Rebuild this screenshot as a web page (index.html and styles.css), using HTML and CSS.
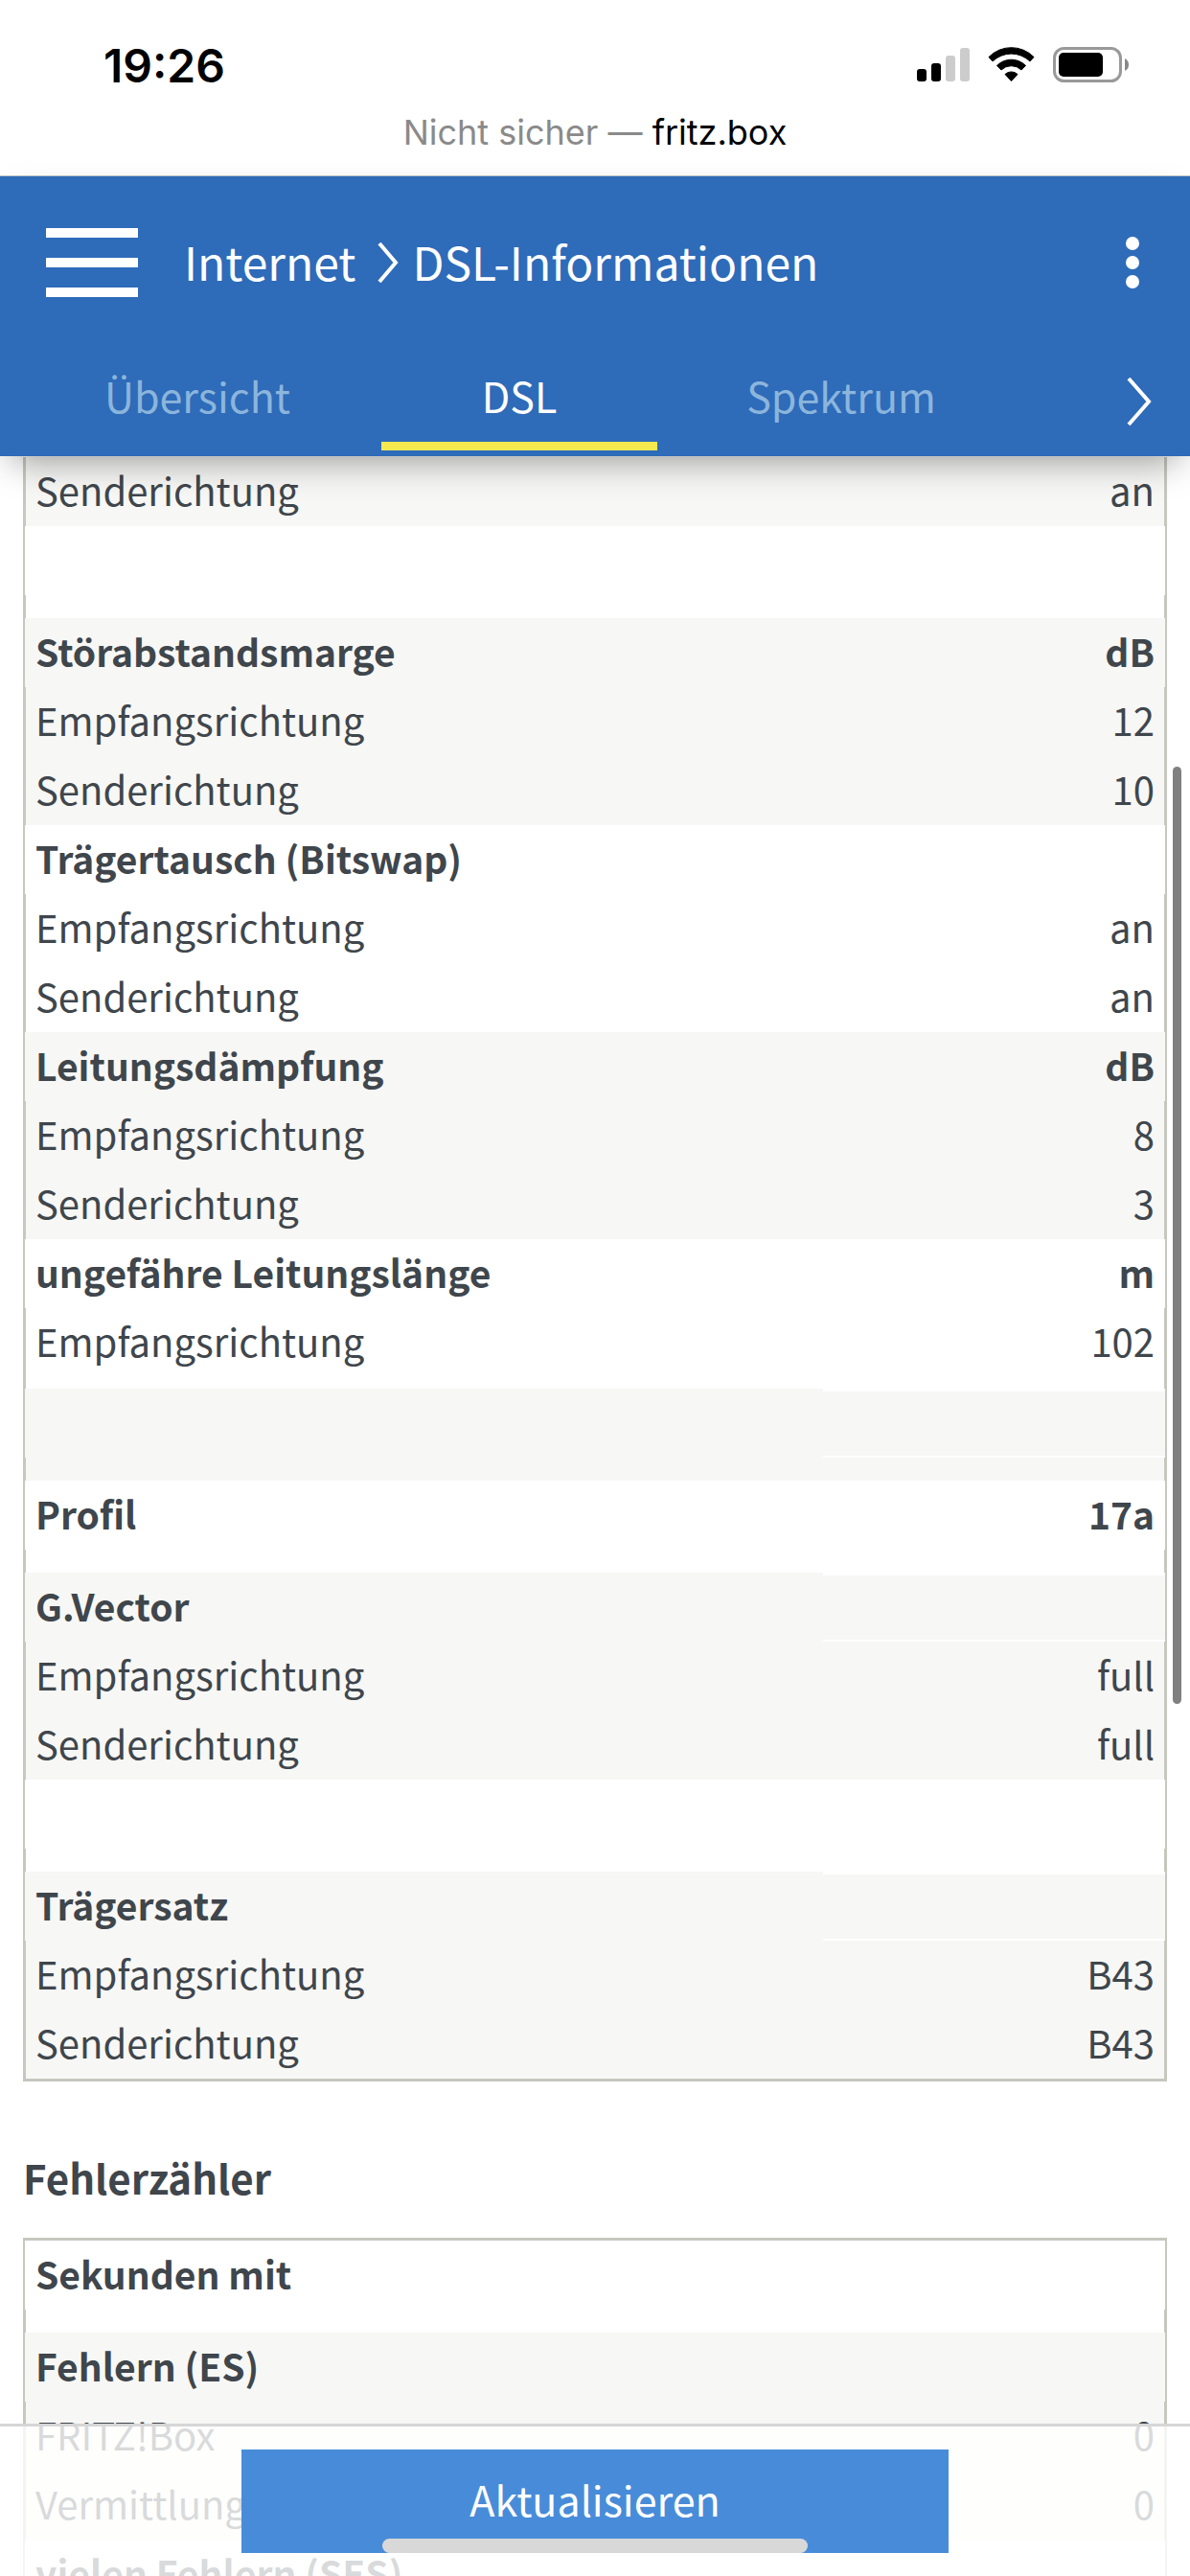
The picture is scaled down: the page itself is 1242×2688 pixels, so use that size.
FILE: index.html
```html
<!DOCTYPE html>
<html lang="de">
<head>
    <meta charset="UTF-8">
    <meta name="viewport" content="width=device-width, initial-scale=1.0">
    <title>FRITZ!Box - DSL-Informationen</title>
    <link rel="stylesheet" href="styles.css">
</head>
<body>

    <div class="status-bar">
        <div class="status-row">
            <span class="clock">19:26</span>
            <svg class="status-icons" width="222" height="38" viewBox="0 0 222 38" aria-hidden="true">
                <rect x="0" y="23" width="10" height="13" rx="3"/>
                <rect x="15" y="17" width="10" height="19" rx="3"/>
                <rect x="30" y="9" width="10" height="27" rx="3" fill="#ccc"/>
                <rect x="45" y="1" width="10" height="35" rx="3" fill="#ccc"/>
                <path d="M75 10.500A33 33 0 0 1 122 10.500L118 15A28 28 0 0 0 79 15Z" stroke="#000" stroke-linejoin="round"/>
                <path d="M83.500 19.500A21 21 0 0 1 113.500 19.500L109 24A15 15 0 0 0 88 24Z" stroke="#000" stroke-linejoin="round"/>
                <path d="M92 28.500A9.500 9.500 0 0 1 105 28.500L98.500 35.500Z" stroke="#000" stroke-linejoin="round"/>
                <rect x="143.500" y="1.500" width="69" height="34" rx="10" fill="none" stroke="#999" stroke-width="3"/>
                <rect x="148" y="6" width="46" height="25" rx="5"/>
                <path d="M217 12Q221 14 221 18.500T217 25Z" fill="#888"/>
            </svg>
        </div>
        <div class="address">Nicht sicher — <span class="host">fritz.box</span></div>
    </div>

    <header class="header">
        <div class="title-row">
            <button class="menu-button" type="button" aria-label="Menü">
                <span></span><span></span><span></span>
            </button>
            <h1 class="breadcrumb">
                <a href="#internet">Internet</a>
                <svg width="24" height="46" viewBox="0 0 24 46" aria-hidden="true"><path d="M3 3L20 23L3 43"/></svg>
                <span>DSL-Informationen</span>
            </h1>
            <button class="more-button" type="button" aria-label="Mehr">
                <span></span><span></span><span></span>
            </button>
        </div>
        <nav class="tabs">
            <a href="#uebersicht">Übersicht</a>
            <a href="#dsl" class="active">DSL</a>
            <a href="#spektrum">Spektrum</a>
            <button class="next-button" type="button" aria-label="Weitere Reiter">
                <svg width="30" height="54" viewBox="0 0 30 54" aria-hidden="true"><path d="M4 3L25 27L4 51"/></svg>
            </button>
        </nav>
    </header>

    <main class="content">
        <table class="values">
            <tbody class="shaded">
                <tr><td>Senderichtung</td><td>an</td></tr>
            </tbody>
            <tbody>
                <tr><th></th><th></th></tr>
                <tr class="spacer"><td></td><td></td></tr>
            </tbody>
            <tbody class="shaded">
                <tr><th>Störabstandsmarge</th><th>dB</th></tr>
                <tr><td>Empfangsrichtung</td><td>12</td></tr>
                <tr><td>Senderichtung</td><td>10</td></tr>
            </tbody>
            <tbody>
                <tr><th>Trägertausch (Bitswap)</th><th></th></tr>
                <tr><td>Empfangsrichtung</td><td>an</td></tr>
                <tr><td>Senderichtung</td><td>an</td></tr>
            </tbody>
            <tbody class="shaded">
                <tr><th>Leitungsdämpfung</th><th>dB</th></tr>
                <tr><td>Empfangsrichtung</td><td>8</td></tr>
                <tr><td>Senderichtung</td><td>3</td></tr>
            </tbody>
            <tbody>
                <tr><th>ungefähre Leitungslänge</th><th>m</th></tr>
                <tr class="last"><td>Empfangsrichtung</td><td>102</td></tr>
            </tbody>
            <tbody class="shaded">
                <tr><th></th><th class="empty"></th></tr>
                <tr class="spacer"><td></td><td></td></tr>
            </tbody>
            <tbody>
                <tr><th>Profil</th><th>17a</th></tr>
                <tr class="spacer"><td></td><td></td></tr>
            </tbody>
            <tbody class="shaded">
                <tr><th>G.Vector</th><th class="empty"></th></tr>
                <tr><td>Empfangsrichtung</td><td>full</td></tr>
                <tr><td>Senderichtung</td><td>full</td></tr>
            </tbody>
            <tbody>
                <tr><th></th><th></th></tr>
                <tr class="spacer"><td></td><td></td></tr>
            </tbody>
            <tbody class="shaded">
                <tr><th>Trägersatz</th><th class="empty"></th></tr>
                <tr><td>Empfangsrichtung</td><td>B43</td></tr>
                <tr><td>Senderichtung</td><td>B43</td></tr>
            </tbody>
        </table>

        <h2>Fehlerzähler</h2>

        <table class="values errors">
            <tbody>
                <tr><th>Sekunden mit</th><th></th></tr>
                <tr class="spacer"><td></td><td></td></tr>
            </tbody>
            <tbody class="shaded">
                <tr><th>Fehlern (ES)</th><th></th></tr>
                <tr><td>FRITZ!Box</td><td>0</td></tr>
                <tr><td>Vermittlungsstelle</td><td>0</td></tr>
            </tbody>
            <tbody>
                <tr><th>vielen Fehlern (SES)</th><th></th></tr>
            </tbody>
        </table>

        <div class="scroll-thumb"></div>
    </main>

    <footer class="footer">
        <button class="refresh-button" type="button">Aktualisieren</button>
        <div class="home-indicator"></div>
    </footer>

</body>
</html>
```
FILE: styles.css
```css
* {
    box-sizing: border-box;
}

body {
    font-family: "Noto Sans CJK SC", "Noto Sans", sans-serif;
    font-size: 40px;
    color: #3f464c;
    background-color: #fff;
    margin: 0;
    height: 100vh;
    display: flex;
    flex-direction: column;
    overflow: hidden;
}

button {
    font-family: inherit;
    border: none;
    padding: 0;
    background: none;
    cursor: pointer;
}

a {
    color: inherit;
    text-decoration: none;
}

/* phone status bar */
.status-bar {
    flex: none;
    font-family: Inter, sans-serif;
    color: #000;
    border-bottom: 1px solid #c4c4c4;
}

.status-row {
    display: flex;
    justify-content: space-between;
    align-items: center;
    height: 106px;
    padding: 30px 63px 0 108px;
}

.clock {
    font-size: 48px;
    font-weight: 600;
}

.address {
    font-size: 36px;
    line-height: 44px;
    padding: 10px 0 23px;
    text-align: center;
    color: #8a8a8a;
}

.host {
    color: #000;
}

/* blue header */
.header {
    flex: none;
    position: relative;
    z-index: 1;
    background-color: #2e6bb9;
    color: #fff;
    box-shadow: 0 16px 36px -12px rgba(0, 0, 0, 0.4);
}

.title-row {
    display: flex;
    align-items: center;
    height: 180px;
    padding: 0 46px 0 48px;
}

.menu-button {
    display: flex;
    flex-direction: column;
    justify-content: space-between;
    width: 96px;
    height: 72px;
    margin-right: 48px;
}

.menu-button span {
    width: 100%;
    height: 10px;
    background-color: #fff;
}

.breadcrumb {
    display: flex;
    align-items: center;
    flex: 1;
    margin: 0;
    font-size: 48px;
    font-weight: 400;
    line-height: 72px;
}

.breadcrumb a,
.breadcrumb span {
    padding-bottom: 4px;
}

.breadcrumb svg {
    margin: 0 13px 0 22px;
}

.header svg {
    fill: none;
    stroke: #fff;
    stroke-width: 4;
}

.more-button {
    display: flex;
    flex-direction: column;
    align-items: center;
    gap: 6px;
    width: 28px;
}

.more-button span {
    width: 14px;
    height: 14px;
    border-radius: 50%;
    background-color: #fff;
}

.tabs {
    display: flex;
    gap: 48px;
    height: 112px;
    padding: 0 38px 6px 62px;
}

.tabs a {
    width: 288px;
    line-height: 96px;
    font-size: 43px;
    text-align: center;
    color: #8cb5dc;
    border-bottom: 9px solid transparent;
}

.tabs .active {
    color: #fff;
    border-color: #f4ea50;
}

.next-button {
    margin: 0 0 0 auto;
    padding-top: 8px;
}

/* value tables */
.content {
    flex: 1;
    position: relative;
    padding: 1px 24px 0;
    overflow: hidden;
}

.values {
    width: 100%;
    table-layout: fixed;
    border-collapse: separate;
    border-spacing: 0;
    border: 2px solid #c6c7bf;
    border-top: none;
    border-bottom-width: 3px;
}

.values th,
.values td {
    height: 72px;
    padding: 0 10px 4px;
    line-height: 68px;
    vertical-align: top;
    text-align: left;
    white-space: nowrap;
}

.values th {
    font-size: 39px;
    font-weight: 600;
    padding: 0 11px 4px;
}

.values th:first-child,
.values td:first-child {
    width: 70%;
}

.values th:last-child,
.values td:last-child {
    text-align: right;
}

.values td:first-child {
    border-left: 1px solid #c6c7bf;
}

.values td:last-child {
    border-right: 1px solid #c6c7bf;
}

.values .spacer td {
    height: 24px;
    padding: 0;
}

.values .last td {
    height: 84px;
}

.shaded th,
.shaded td {
    background-color: #f7f7f5;
}

.values .empty {
    border-top: 3px solid #fff;
    border-bottom: 2px solid #fff;
}

h2 {
    margin: 64px 0 27px;
    font-size: 42px;
    font-weight: 600;
    line-height: 72px;
}

.errors {
    border-top: 3px solid #c6c7bf;
}

.scroll-thumb {
    position: absolute;
    top: 324px;
    right: 9px;
    width: 9px;
    height: 978px;
    border-radius: 5px;
    background-color: #808080;
}

/* bottom bar */
.footer {
    position: fixed;
    left: 0;
    right: 0;
    bottom: 0;
    z-index: 1;
    padding: 24px 252px;
    border-top: 3px solid #d6d6d6;
    background-color: rgba(255, 255, 255, 0.8);
}

.refresh-button {
    display: block;
    width: 100%;
    height: 108px;
    padding-bottom: 6px;
    font-size: 43px;
    color: #fff;
    background-color: #488cd9;
}

.home-indicator {
    position: absolute;
    bottom: 24px;
    left: 50%;
    width: 444px;
    height: 15px;
    margin-left: -222px;
    border-radius: 8px;
    background-color: #d8d8d8;
}
```
